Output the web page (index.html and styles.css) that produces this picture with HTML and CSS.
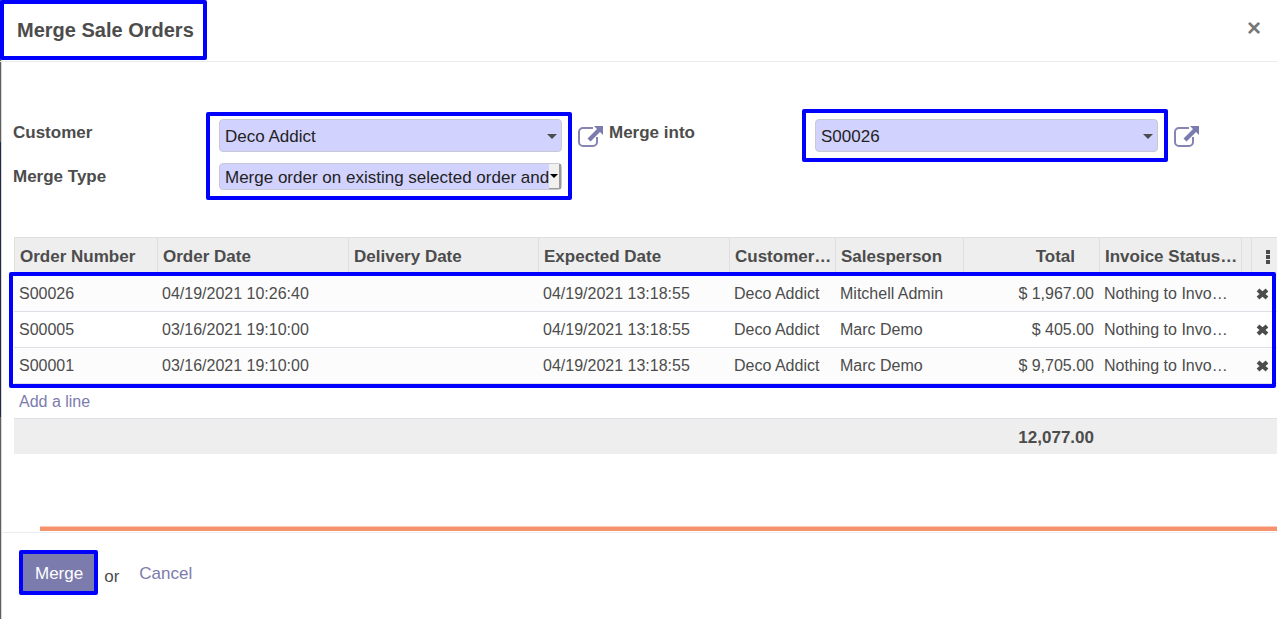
FILE: index.html
```html
<!DOCTYPE html>
<html lang="en">
<head>
<meta charset="utf-8">
<title>Merge Sale Orders</title>
<link rel="stylesheet" href="styles.css">
</head>
<body>
<div class="page">
  <div class="backdrop"></div>
  <main class="modal">
    <header class="modal-header">
      <h1 class="title mark">Merge Sale Orders</h1>
      <button class="close" type="button" aria-label="Close">×</button>
    </header>

    <form class="form">
      <div class="labels">
        <label for="customer">Customer</label>
        <label for="merge-type">Merge Type</label>
      </div>
      <div class="fields fields-left mark">
        <div class="control">
          <input id="customer" class="field" type="text" value="Deco Addict">
          <svg class="caret" viewBox="0 0 10 5" aria-hidden="true"><path d="M0 0h10L5 5z"/></svg>
        </div>
        <div class="control">
          <select id="merge-type" class="field field-select">
            <option>Merge order on existing selected order and cancel others</option>
          </select>
          <span class="select-button"><svg viewBox="0 0 8 4" aria-hidden="true"><path d="M0 0h8L4 4z"/></svg></span>
        </div>
      </div>
      <button class="external" type="button" aria-label="Open customer">
        <svg viewBox="0 0 25 22" aria-hidden="true"><path class="stroke" d="M15 3H5a4 4 0 0 0-4 4v10a4 4 0 0 0 4 4h10a4 4 0 0 0 4-4v-5"/><path class="arrow" d="M16 1h9v9l-3-3-9.500 9.500-3-3L19 4z"/></svg>
      </button>
      <div class="labels">
        <label for="merge-into">Merge into</label>
      </div>
      <div class="fields fields-right mark">
        <div class="control">
          <input id="merge-into" class="field" type="text" value="S00026">
          <svg class="caret" viewBox="0 0 10 5" aria-hidden="true"><path d="M0 0h10L5 5z"/></svg>
        </div>
      </div>
      <button class="external" type="button" aria-label="Open order">
        <svg viewBox="0 0 25 22" aria-hidden="true"><path class="stroke" d="M15 3H5a4 4 0 0 0-4 4v10a4 4 0 0 0 4 4h10a4 4 0 0 0 4-4v-5"/><path class="arrow" d="M16 1h9v9l-3-3-9.500 9.500-3-3L19 4z"/></svg>
      </button>
    </form>

    <div class="list">
      <table class="orders">
        <colgroup>
          <col class="c-number"><col class="c-date"><col class="c-delivery"><col class="c-date"><col class="c-customer"><col class="c-sales"><col class="c-total"><col class="c-status"><col class="c-gap"><col class="c-action">
        </colgroup>
        <thead>
          <tr>
            <th>Order Number</th><th>Order Date</th><th>Delivery Date</th><th>Expected Date</th><th>Customer…</th><th>Salesperson</th><th class="total">Total</th><th>Invoice Status…</th><th></th>
            <th class="action"><button type="button" aria-label="Optional columns"><svg class="dots" viewBox="0 0 4 14" aria-hidden="true"><path d="M0 0h4v4H0zM0 5h4v4H0zM0 10h4v4H0z"/></svg></button></th>
          </tr>
        </thead>
        <tbody>
          <tr>
            <td>S00026</td><td>04/19/2021 10:26:40</td><td></td><td>04/19/2021 13:18:55</td><td>Deco Addict</td><td>Mitchell Admin</td><td class="amount">$ 1,967.00</td><td>Nothing to Invo…</td><td></td>
            <td class="action"><button type="button" aria-label="Delete row"><svg class="cross" viewBox="0 0 13 12" aria-hidden="true"><path d="M2 2l9 8M11 2l-9 8"/></svg></button></td>
          </tr>
          <tr>
            <td>S00005</td><td>03/16/2021 19:10:00</td><td></td><td>04/19/2021 13:18:55</td><td>Deco Addict</td><td>Marc Demo</td><td class="amount">$ 405.00</td><td>Nothing to Invo…</td><td></td>
            <td class="action"><button type="button" aria-label="Delete row"><svg class="cross" viewBox="0 0 13 12" aria-hidden="true"><path d="M2 2l9 8M11 2l-9 8"/></svg></button></td>
          </tr>
          <tr>
            <td>S00001</td><td>03/16/2021 19:10:00</td><td></td><td>04/19/2021 13:18:55</td><td>Deco Addict</td><td>Marc Demo</td><td class="amount">$ 9,705.00</td><td>Nothing to Invo…</td><td></td>
            <td class="action"><button type="button" aria-label="Delete row"><svg class="cross" viewBox="0 0 13 12" aria-hidden="true"><path d="M2 2l9 8M11 2l-9 8"/></svg></button></td>
          </tr>
          <tr class="add">
            <td colspan="10"><a href="#">Add a line</a></td>
          </tr>
        </tbody>
        <tfoot>
          <tr>
            <td colspan="6"></td><td class="amount">12,077.00</td><td colspan="3"></td>
          </tr>
        </tfoot>
      </table>
      <div class="rows-mark mark"></div>
    </div>

    <div class="rule"></div>
    <footer class="modal-footer">
      <button class="merge mark" type="button">Merge</button>
      <span class="or">or</span>
      <a class="cancel" href="#">Cancel</a>
    </footer>
  </main>
</div>
</body>
</html>
```

FILE: styles.css
```css
* { box-sizing: border-box; }

body {
  margin: 0;
  background: #fff;
  color: #4c4c4c;
  font-family: "Liberation Sans", Arial, sans-serif;
  font-size: 17px;
  line-height: 24px;
}

button {
  margin: 0;
  padding: 0;
  border: 0;
  background: none;
  color: inherit;
  font: inherit;
  cursor: pointer;
}

a { color: #7c7bad; text-decoration: none; }
svg { display: block; }

.mark { border: 4px solid #00f; border-radius: 2px; }

.page { display: flex; min-height: 100vh; overflow: hidden; }

.backdrop {
  flex: none;
  width: 2px;
  border-right: 1px solid #d8d8d8;
  background: linear-gradient(#5f5f5f 142px, #232848 142px, #232848 417px, #5f5f5f 417px);
}

.modal { flex: 1; min-width: 0; }

.modal-header {
  display: flex;
  align-items: flex-start;
  justify-content: space-between;
  margin-left: -2px;
  padding-right: 16px;
  padding-bottom: 1px;
  border-bottom: 1px solid #ebebeb;
}

.title {
  margin: 0;
  padding: 14px 9px 14px 13px;
  background: #fff;
  font-size: 20px;
  line-height: 24px;
}

.close {
  padding-top: 16px;
  color: #777;
  font-size: 24px;
  font-weight: bold;
}

.form {
  display: grid;
  grid-template-columns: 193px 1fr 37px 193px 1fr 37px;
  align-items: start;
  padding: 47px 72px 0 11px;
}

.labels {
  display: flex;
  flex-direction: column;
  gap: 20px;
  padding-top: 12px;
  font-weight: bold;
}

.fields { display: flex; flex-direction: column; gap: 11px; }
.fields-left { margin-top: 3px; padding: 3px 6px 6px 9px; }
.fields-right { padding: 6px 6px 6px 9px; }

.control { position: relative; display: flex; }

.field {
  width: 100%;
  height: 33px;
  padding: 2px 24px 0 5px;
  border: 1px solid #c9c9d3;
  border-radius: 4px;
  background: #d2d2ff;
  color: #222;
  font: inherit;
}

.field-select {
  height: 27px;
  padding: 2px 12px 0 5px;
  appearance: none;
}

.caret {
  position: absolute;
  top: 15px;
  right: 5px;
  width: 10px;
  height: 5px;
  fill: #4c4c4c;
}

.select-button {
  position: absolute;
  top: 1px;
  right: 1px;
  display: flex;
  align-items: center;
  justify-content: center;
  width: 12px;
  height: 25px;
  border-right: 2px solid #999;
  border-bottom: 1px solid #999;
  background: #f0f0ee;
  pointer-events: none;
}

.select-button svg { width: 8px; height: 4px; }

.external { justify-self: start; padding: 16px 0 0 6px; }
.external svg { width: 25px; height: 22px; }
.external .stroke { fill: none; stroke: #8584b3; stroke-width: 2; }
.external .arrow { fill: #7c7bad; stroke: #fff; stroke-width: 1; paint-order: stroke; }

.list { position: relative; margin: 37px 0 0 12px; }

.orders {
  width: 100%;
  table-layout: fixed;
  border-collapse: separate;
  border-spacing: 0;
}

.c-number { width: 143px; }
.c-date { width: 191px; }
.c-delivery { width: 190px; }
.c-customer { width: 106px; }
.c-sales { width: 128px; }
.c-total { width: 136px; }
.c-status { width: 142px; }
.c-gap { width: 10px; }
.c-action { width: 26px; }

.orders th,
.orders td {
  overflow: hidden;
  padding: 0 5px;
  text-align: left;
  text-overflow: ellipsis;
  white-space: nowrap;
}

.orders th {
  height: 39px;
  padding-right: 2px;
  border-top: 1px solid #dfdfdf;
  border-left: 1px solid #dfdfdf;
  background: #eee;
}

.orders td { height: 36px; font-size: 16px; }
.orders tbody td { border-bottom: 1px solid #dfe0e6; }
.orders tbody tr:nth-child(odd) td { background: #fcfcfc; }
.orders .add td { height: 35px; padding-top: 2px; }
.orders tfoot td { height: 35px; padding-top: 2px; background: #eee; font-size: 17px; font-weight: bold; }
.orders .amount { text-align: right; }
.orders th.total { padding-right: 24px; text-align: right; }
.orders .action { padding: 0; }
.orders .action button { display: block; margin-left: 5px; }
.orders th.action button { margin-left: 14px; }

.dots { width: 4px; height: 14px; fill: #4c4c4c; }
.cross { width: 13px; height: 12px; fill: none; stroke: #4c4c4c; stroke-width: 4; }

.rows-mark {
  position: absolute;
  top: 35px;
  right: 1px;
  left: -5px;
  height: 116px;
  pointer-events: none;
}

.rule {
  height: 5px;
  margin: 72px 0 1px 38px;
  border-top: 1px solid #fbc9b4;
  background: #f7936c;
}

.modal-footer {
  display: flex;
  align-items: flex-start;
  padding: 17px;
  border-top: 1px solid #ebedf0;
}

.merge {
  height: 45px;
  padding: 2px 11px 0 12px;
  background: #7c7bad;
  color: #fff;
}

.or { padding: 15px 20px 0 6px; }
.cancel { padding-top: 12px; }
```
